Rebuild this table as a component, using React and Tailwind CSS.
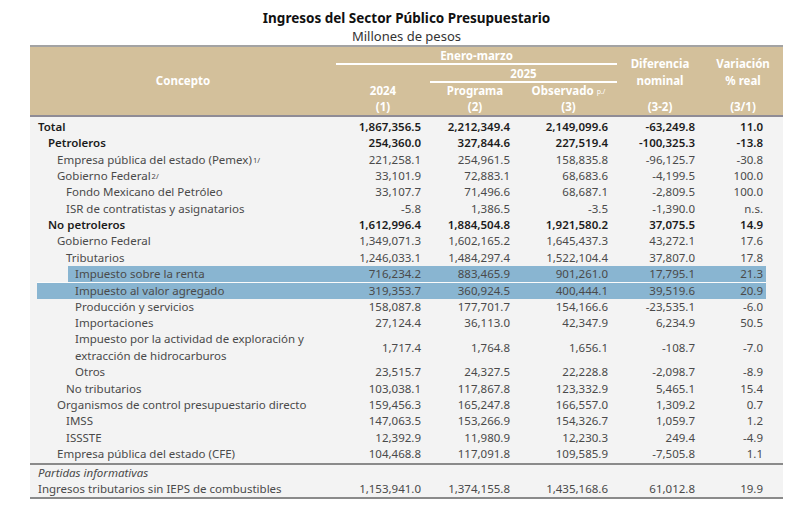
import React from "react";

const rows = [
  { c: "Total", l: 0, b: true, v: ["1,867,356.5", "2,212,349.4", "2,149,099.6", "-63,249.8", "11.0"] },
  { c: "Petroleros", l: 1, b: true, v: ["254,360.0", "327,844.6", "227,519.4", "-100,325.3", "-13.8"] },
  { c: "Empresa pública del estado (Pemex)", sup: "1/", l: 2, v: ["221,258.1", "254,961.5", "158,835.8", "-96,125.7", "-30.8"] },
  { c: "Gobierno Federal", sup: "2/", l: 2, v: ["33,101.9", "72,883.1", "68,683.6", "-4,199.5", "100.0"] },
  { c: "Fondo Mexicano del Petróleo", l: 3, v: ["33,107.7", "71,496.6", "68,687.1", "-2,809.5", "100.0"] },
  { c: "ISR de contratistas y asignatarios", l: 3, v: ["-5.8", "1,386.5", "-3.5", "-1,390.0", "n.s."] },
  { c: "No petroleros", l: 1, b: true, v: ["1,612,996.4", "1,884,504.8", "1,921,580.2", "37,075.5", "14.9"] },
  { c: "Gobierno Federal", l: 2, v: ["1,349,071.3", "1,602,165.2", "1,645,437.3", "43,272.1", "17.6"] },
  { c: "Tributarios", l: 3, v: ["1,246,033.1", "1,484,297.4", "1,522,104.4", "37,807.0", "17.8"] },
  { c: "Impuesto sobre la renta", l: 4, hl: "short", v: ["716,234.2", "883,465.9", "901,261.0", "17,795.1", "21.3"] },
  { c: "Impuesto al valor agregado", l: 4, hl: "long", v: ["319,353.7", "360,924.5", "400,444.1", "39,519.6", "20.9"] },
  { c: "Producción y servicios", l: 4, v: ["158,087.8", "177,701.7", "154,166.6", "-23,535.1", "-6.0"] },
  { c: "Importaciones", l: 4, v: ["27,124.4", "36,113.0", "42,347.9", "6,234.9", "50.5"] },
  { c: ["Impuesto por la actividad de exploración y", "extracción de hidrocarburos"], l: 4, v: ["1,717.4", "1,764.8", "1,656.1", "-108.7", "-7.0"] },
  { c: "Otros", l: 4, v: ["23,515.7", "24,327.5", "22,228.8", "-2,098.7", "-8.9"] },
  { c: "No tributarios", l: 3, v: ["103,038.1", "117,867.8", "123,332.9", "5,465.1", "15.4"] },
  { c: "Organismos de control presupuestario directo", l: 2, v: ["159,456.3", "165,247.8", "166,557.0", "1,309.2", "0.7"] },
  { c: "IMSS", l: 3, v: ["147,063.5", "153,266.9", "154,326.7", "1,059.7", "1.2"] },
  { c: "ISSSTE", l: 3, v: ["12,392.9", "11,980.9", "12,230.3", "249.4", "-4.9"] },
  { c: "Empresa pública del estado (CFE)", l: 2, v: ["104,468.8", "117,091.8", "109,585.9", "-7,505.8", "1.1"] },
];

const indent = ["pl-[1px]", "pl-[11px]", "pl-[20px]", "pl-[29px]", "pl-[38px]"];

function Row({ r, italic }) {
  const short = r.hl === "short";
  const two = Array.isArray(r.c);
  const outer = short ? "pl-[38px] pr-[17px]" : "pl-[7px] pr-[17px]";
  const bg = r.hl ? "bg-[#89b5d1]" : "";
  const gap = r.hl === "long" ? "border-t border-[#fbfbfb]" : "";
  const h = two ? "h-[32.7px]" : "h-[16.35px]";
  const pad = short ? "pl-[7px]" : indent[r.l];
  const color = r.b ? "text-[#1c1c1c] font-semibold" : "text-[#4a4a4a]";
  return (
    <div className={outer}>
      <div className={`flex items-center ${h} ${bg} ${gap} ${color}`}>
        <div className={`flex-1 ${pad} ${italic ? "italic" : ""} leading-[16.35px] whitespace-nowrap`}>
          {two ? (
            <>
              <div>{r.c[0]}</div>
              <div>{r.c[1]}</div>
            </>
          ) : (
            <span>
              {r.c}
              {r.sup && <sup className="text-[7.5px] leading-none ml-[1px] relative -top-[1px]">{r.sup}</sup>}
            </span>
          )}
        </div>
        {r.v ? (
          <>
            <div className="w-[94px] text-right pr-[9px] leading-[16.35px]">{r.v[0]}</div>
            <div className="w-[90px] text-right pr-[10px] leading-[16.35px]">{r.v[1]}</div>
            <div className="w-[97px] text-right pr-[9px] leading-[16.35px]">{r.v[2]}</div>
            <div className="w-[86px] text-right pr-[8px] leading-[16.35px]">{r.v[3]}</div>
            <div className="w-[63px] text-right pr-[3px] leading-[16.35px]">{r.v[4]}</div>
          </>
        ) : null}
      </div>
    </div>
  );
}

export default function App() {
  return (
    <div
      className="w-[797px] h-[505px] bg-white overflow-hidden"
      style={{ fontFamily: '"Noto Sans", "Open Sans", sans-serif' }}
    >
      <div className="ml-[30px] w-[753px]">
        <div className="pt-[9px] text-center">
          <div className="text-[13.5px] leading-[18px] font-bold text-[#111]">
            Ingresos del Sector Público Presupuestario
          </div>
          <div className="text-[13px] leading-[18px] text-[#333]">Millones de pesos</div>
        </div>

        {/* Header */}
        <div className="border-t-2 border-[#a3a3a3] border-b-2 border-b-[#8f8c96] bg-[#d3c09b] text-white font-bold text-[11.5px]">
          <div className="grid grid-cols-[306px_94px_90px_97px_86px_80px] grid-rows-[18px_18px_16px_16px]">
            <div className="col-start-1 row-start-1 row-span-4 flex items-center justify-center">Concepto</div>
            <div className="col-start-2 col-span-3 row-start-1 border-b-2 border-white text-center leading-[14px] pt-[2px]">
              Enero-marzo
            </div>
            <div className="col-start-3 col-span-2 row-start-2 border-b-2 border-white text-center leading-[14px] pt-[2px]">
              2025
            </div>
            <div className="col-start-2 row-start-3 text-center leading-[16px]">2024</div>
            <div className="col-start-3 row-start-3 text-center leading-[16px]">Programa</div>
            <div className="col-start-4 row-start-3 text-center leading-[16px]">
              Observado<sup className="text-[7px] ml-[3px] font-normal relative -top-[1px]">p./</sup>
            </div>
            <div className="col-start-5 row-start-1 row-span-3 text-center leading-[17px] pt-[8px]">
              <div>Diferencia</div>
              <div>nominal</div>
            </div>
            <div className="col-start-6 row-start-1 row-span-3 text-center leading-[17px] pt-[8px]">
              <div>Variación</div>
              <div>% real</div>
            </div>
            <div className="col-start-2 row-start-4 text-center leading-[16px]">(1)</div>
            <div className="col-start-3 row-start-4 text-center leading-[16px]">(2)</div>
            <div className="col-start-4 row-start-4 text-center leading-[16px]">(3)</div>
            <div className="col-start-5 row-start-4 text-center leading-[16px]">(3-2)</div>
            <div className="col-start-6 row-start-4 text-center leading-[16px]">(3/1)</div>
          </div>
        </div>

        {/* Body */}
        <div className="bg-[#f3f3f3] text-[11.5px] pt-[2px]">
          {rows.map((r, i) => (
            <Row key={i} r={r} />
          ))}
          <div className="border-t-2 border-[#8a8a8a] mt-[0.5px]">
            <Row r={{ c: "Partidas informativas", l: 0 }} italic />
            <Row
              r={{ c: "Ingresos tributarios sin IEPS de combustibles", l: 0, v: ["1,153,941.0", "1,374,155.8", "1,435,168.6", "61,012.8", "19.9"] }}
            />
          </div>
          <div className="border-t-2 border-[#8a8a8a]" />
        </div>
      </div>
    </div>
  );
}
